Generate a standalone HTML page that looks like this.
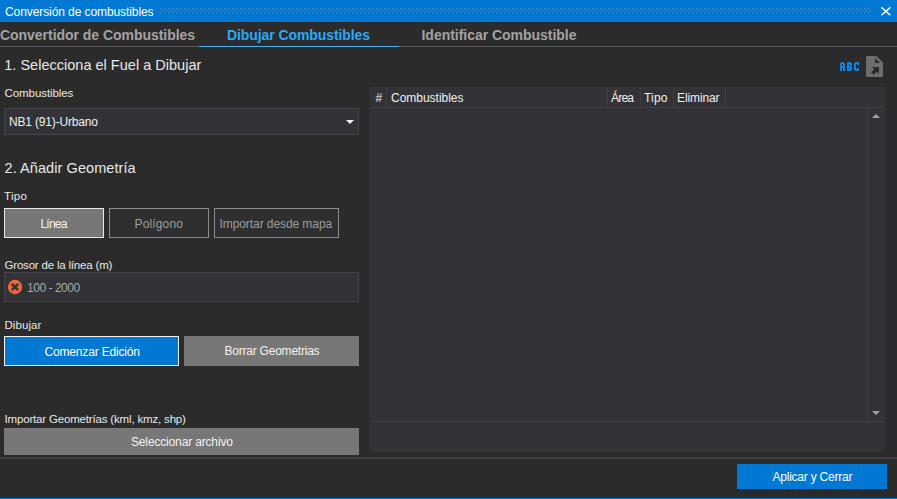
<!DOCTYPE html>
<html><head><meta charset="utf-8">
<style>
*{margin:0;padding:0;box-sizing:border-box}
html,body{width:897px;height:499px;overflow:hidden;background:#2b2b2b;font-family:"Liberation Sans",sans-serif}
.t{position:absolute;white-space:pre;line-height:1}
svg{position:absolute;display:block}
</style></head><body>
<div style="position:absolute;left:0px;top:0px;width:897px;height:22px;background:#0078d4;"></div>
<svg width="712" height="6" style="left:160px;top:8px"><defs><pattern id="p" width="4" height="4" patternUnits="userSpaceOnUse"><rect x="0" y="0" width="1" height="1" fill="#4e9cdc"/><rect x="2" y="2" width="1" height="1" fill="#4e9cdc"/></pattern></defs><rect x="0" y="0" width="711" height="5" fill="url(#p)"/></svg>
<div class="t" style="left:5.0px;top:6px;font-size:12px;color:#ffffff;letter-spacing:-0.088px">Conversión de combustibles</div>
<svg width="12" height="12" style="left:880px;top:5px"><path d="M1.4 2.4 L10.4 10.2 M10.4 2.4 L1.4 10.2" stroke="#fff" stroke-width="1.4"/></svg>
<div class="t" style="left:0.0px;top:28px;font-size:14px;font-weight:bold;color:#a3a3a3;letter-spacing:-0.038px">Convertidor de Combustibles</div>
<div class="t" style="left:227.0px;top:28px;font-size:14px;font-weight:bold;color:#27a9f8;letter-spacing:-0.084px">Dibujar Combustibles</div>
<div class="t" style="left:421.5px;top:28px;font-size:14px;font-weight:bold;color:#a3a3a3;letter-spacing:-0.027px">Identificar Combustible</div>
<div style="position:absolute;left:0px;top:46px;width:897px;height:1px;background:#555555;"></div>
<div style="position:absolute;left:199px;top:46px;width:200px;height:1px;background:#4cb3f5;"></div>
<div class="t" style="left:4.25px;top:58px;font-size:14.5px;color:#e8e8e8;letter-spacing:0.013px">1. Selecciona el Fuel a Dibujar</div>
<svg width="19" height="9" style="left:840px;top:62px" shape-rendering="crispEdges" fill="#0a84e6"><rect x="1" y="0" width="1" height="1"/><rect x="2" y="0" width="1" height="1"/><rect x="3" y="0" width="1" height="1"/><rect x="0" y="1" width="1" height="1"/><rect x="1" y="1" width="1" height="1"/><rect x="2" y="1" width="1" height="1"/><rect x="3" y="1" width="1" height="1"/><rect x="4" y="1" width="1" height="1"/><rect x="0" y="2" width="1" height="1"/><rect x="1" y="2" width="1" height="1"/><rect x="3" y="2" width="1" height="1"/><rect x="4" y="2" width="1" height="1"/><rect x="0" y="3" width="1" height="1"/><rect x="1" y="3" width="1" height="1"/><rect x="3" y="3" width="1" height="1"/><rect x="4" y="3" width="1" height="1"/><rect x="0" y="4" width="1" height="1"/><rect x="1" y="4" width="1" height="1"/><rect x="2" y="4" width="1" height="1"/><rect x="3" y="4" width="1" height="1"/><rect x="4" y="4" width="1" height="1"/><rect x="0" y="5" width="1" height="1"/><rect x="1" y="5" width="1" height="1"/><rect x="2" y="5" width="1" height="1"/><rect x="3" y="5" width="1" height="1"/><rect x="4" y="5" width="1" height="1"/><rect x="0" y="6" width="1" height="1"/><rect x="1" y="6" width="1" height="1"/><rect x="3" y="6" width="1" height="1"/><rect x="4" y="6" width="1" height="1"/><rect x="0" y="7" width="1" height="1"/><rect x="1" y="7" width="1" height="1"/><rect x="3" y="7" width="1" height="1"/><rect x="4" y="7" width="1" height="1"/><rect x="0" y="8" width="1" height="1"/><rect x="1" y="8" width="1" height="1"/><rect x="3" y="8" width="1" height="1"/><rect x="4" y="8" width="1" height="1"/><rect x="7" y="0" width="1" height="1"/><rect x="8" y="0" width="1" height="1"/><rect x="9" y="0" width="1" height="1"/><rect x="10" y="0" width="1" height="1"/><rect x="7" y="1" width="1" height="1"/><rect x="8" y="1" width="1" height="1"/><rect x="9" y="1" width="1" height="1"/><rect x="10" y="1" width="1" height="1"/><rect x="11" y="1" width="1" height="1"/><rect x="7" y="2" width="1" height="1"/><rect x="8" y="2" width="1" height="1"/><rect x="10" y="2" width="1" height="1"/><rect x="11" y="2" width="1" height="1"/><rect x="7" y="3" width="1" height="1"/><rect x="8" y="3" width="1" height="1"/><rect x="10" y="3" width="1" height="1"/><rect x="11" y="3" width="1" height="1"/><rect x="7" y="4" width="1" height="1"/><rect x="8" y="4" width="1" height="1"/><rect x="9" y="4" width="1" height="1"/><rect x="10" y="4" width="1" height="1"/><rect x="7" y="5" width="1" height="1"/><rect x="8" y="5" width="1" height="1"/><rect x="9" y="5" width="1" height="1"/><rect x="10" y="5" width="1" height="1"/><rect x="11" y="5" width="1" height="1"/><rect x="7" y="6" width="1" height="1"/><rect x="8" y="6" width="1" height="1"/><rect x="10" y="6" width="1" height="1"/><rect x="11" y="6" width="1" height="1"/><rect x="7" y="7" width="1" height="1"/><rect x="8" y="7" width="1" height="1"/><rect x="9" y="7" width="1" height="1"/><rect x="10" y="7" width="1" height="1"/><rect x="11" y="7" width="1" height="1"/><rect x="7" y="8" width="1" height="1"/><rect x="8" y="8" width="1" height="1"/><rect x="9" y="8" width="1" height="1"/><rect x="10" y="8" width="1" height="1"/><rect x="15" y="0" width="1" height="1"/><rect x="16" y="0" width="1" height="1"/><rect x="17" y="0" width="1" height="1"/><rect x="18" y="0" width="1" height="1"/><rect x="14" y="1" width="1" height="1"/><rect x="15" y="1" width="1" height="1"/><rect x="16" y="1" width="1" height="1"/><rect x="17" y="1" width="1" height="1"/><rect x="18" y="1" width="1" height="1"/><rect x="14" y="2" width="1" height="1"/><rect x="15" y="2" width="1" height="1"/><rect x="17" y="2" width="1" height="1"/><rect x="18" y="2" width="1" height="1"/><rect x="14" y="3" width="1" height="1"/><rect x="15" y="3" width="1" height="1"/><rect x="14" y="4" width="1" height="1"/><rect x="15" y="4" width="1" height="1"/><rect x="14" y="5" width="1" height="1"/><rect x="15" y="5" width="1" height="1"/><rect x="14" y="6" width="1" height="1"/><rect x="15" y="6" width="1" height="1"/><rect x="17" y="6" width="1" height="1"/><rect x="18" y="6" width="1" height="1"/><rect x="14" y="7" width="1" height="1"/><rect x="15" y="7" width="1" height="1"/><rect x="16" y="7" width="1" height="1"/><rect x="17" y="7" width="1" height="1"/><rect x="18" y="7" width="1" height="1"/><rect x="15" y="8" width="1" height="1"/><rect x="16" y="8" width="1" height="1"/><rect x="17" y="8" width="1" height="1"/><rect x="18" y="8" width="1" height="1"/></svg>
<svg width="20" height="24" style="left:865px;top:55px">
<path d="M2.5 1 H11.5 L18 7.5 V20.5 Q18 22 16.5 22 H2.5 Q1 22 1 20.5 V2.5 Q1 1 2.5 1 Z" fill="#6e6e6e"/>
<path d="M10 3 V8 H15 Z" fill="#2b2b2b"/>
<path d="M7 12 H14 V19 Z" fill="#2b2b2b"/>
<path d="M7.4 18.6 L12 14" stroke="#2b2b2b" stroke-width="3.6"/>
</svg>
<div class="t" style="left:4.5px;top:88px;font-size:11.5px;color:#e8e8e8;letter-spacing:-0.073px">Combustibles</div>
<div style="position:absolute;left:4px;top:108px;width:355px;height:27px;background:#333337;border:1px solid #434349"></div>
<div class="t" style="left:9.0px;top:116px;font-size:12px;color:#f0f0f0;letter-spacing:-0.171px">NB1 (91)-Urbano</div>
<svg width="10" height="6" style="left:345px;top:119px"><path d="M1 1 L9 1 L5 5 Z" fill="#f0f0f0"/></svg>
<div class="t" style="left:4.5px;top:161px;font-size:14.5px;color:#e8e8e8;letter-spacing:0.078px">2. Añadir Geometría</div>
<div class="t" style="left:4.0px;top:191px;font-size:11.5px;color:#e8e8e8;letter-spacing:0.333px">Tipo</div>
<div style="position:absolute;left:4px;top:208px;width:100px;height:30px;background:#777777;border:1px solid #e8e8e8"></div>
<div style="position:absolute;left:109px;top:208px;width:100px;height:30px;background:#2f2f2f;border:1px solid #8a8a8a"></div>
<div style="position:absolute;left:214px;top:208px;width:125px;height:30px;background:#2f2f2f;border:1px solid #8a8a8a"></div>
<div class="t" style="left:40.5px;top:218px;font-size:12px;color:#f2f2f2;letter-spacing:-0.8px">Línea</div>
<div class="t" style="left:134.5px;top:218px;font-size:12px;color:#9c9c9c;letter-spacing:0.143px">Polígono</div>
<div class="t" style="left:219.5px;top:218px;font-size:12px;color:#9c9c9c;letter-spacing:-0.078px">Importar desde mapa</div>
<div class="t" style="left:4.5px;top:260px;font-size:11.5px;color:#e8e8e8;letter-spacing:-0.19px">Grosor de la línea (m)</div>
<div style="position:absolute;left:4px;top:272px;width:355px;height:30px;background:#333337;border:1px solid #434349"></div>
<svg width="16" height="16" style="left:7px;top:279px"><circle cx="8" cy="8" r="7.2" fill="#f0683a"/><path d="M4.8 4.8 L11.2 11.2 M11.2 4.8 L4.8 11.2" stroke="#333337" stroke-width="2.6"/></svg>
<div class="t" style="left:27.0px;top:282px;font-size:12px;color:#a8a8a8;letter-spacing:-0.467px">100 - 2000</div>
<div class="t" style="left:4.5px;top:320px;font-size:11.5px;color:#e8e8e8;letter-spacing:0.067px">Dibujar</div>
<div style="position:absolute;left:4px;top:336px;width:175px;height:30px;background:#0078d4;border:1px solid #f2f2f2"></div>
<div style="position:absolute;left:184px;top:336px;width:175px;height:30px;background:#777777;"></div>
<div class="t" style="left:44.5px;top:346px;font-size:12px;color:#ffffff;letter-spacing:-0.173px">Comenzar Edición</div>
<div class="t" style="left:224.5px;top:345px;font-size:12px;color:#f2f2f2;letter-spacing:-0.225px">Borrar Geometrias</div>
<div class="t" style="left:4.5px;top:414px;font-size:11.5px;color:#e8e8e8;letter-spacing:-0.171px">Importar Geometrías (kml, kmz, shp)</div>
<div style="position:absolute;left:4px;top:428px;width:355px;height:27px;background:#777777;"></div>
<div class="t" style="left:131.0px;top:436px;font-size:12px;color:#f2f2f2;letter-spacing:-0.156px">Seleccionar archivo</div>
<div style="position:absolute;left:370px;top:87px;width:515px;height:365px;background:#333337;"></div>
<div style="position:absolute;left:371px;top:107px;width:513px;height:1px;background:#404046;"></div>
<div style="position:absolute;left:386px;top:88px;width:1px;height:19px;background:#404046;"></div>
<div style="position:absolute;left:607px;top:88px;width:1px;height:19px;background:#404046;"></div>
<div style="position:absolute;left:640px;top:88px;width:1px;height:19px;background:#404046;"></div>
<div style="position:absolute;left:673px;top:88px;width:1px;height:19px;background:#404046;"></div>
<div style="position:absolute;left:725px;top:88px;width:1px;height:19px;background:#404046;"></div>
<div style="position:absolute;left:867px;top:108px;width:1px;height:313px;background:#404046;"></div>
<div style="position:absolute;left:371px;top:421px;width:513px;height:1px;background:#404046;"></div>
<div class="t" style="left:375.5px;top:92px;font-size:12px;color:#f0f0f0;letter-spacing:0.0px">#</div>
<div class="t" style="left:391.0px;top:92px;font-size:12px;color:#f0f0f0;letter-spacing:-0.018px">Combustibles</div>
<div class="t" style="left:611.0px;top:92px;font-size:12px;color:#f0f0f0;letter-spacing:-0.8px">Área</div>
<div class="t" style="left:644.0px;top:92px;font-size:12px;color:#f0f0f0;letter-spacing:0.2px">Tipo</div>
<div class="t" style="left:677.0px;top:92px;font-size:12px;color:#f0f0f0;letter-spacing:-0.114px">Eliminar</div>
<svg width="10" height="6" style="left:871px;top:113px"><path d="M1 5 L9 5 L5 1 Z" fill="#a0a0a0"/></svg>
<svg width="10" height="6" style="left:871px;top:410px"><path d="M1 1 L9 1 L5 5 Z" fill="#a0a0a0"/></svg>
<div style="position:absolute;left:0px;top:457px;width:897px;height:2px;background:#3d3d43;"></div>
<div style="position:absolute;left:737px;top:464px;width:150px;height:25px;background:#0078d4;"></div>
<div class="t" style="left:772.5px;top:471px;font-size:12px;color:#ffffff;letter-spacing:-0.227px">Aplicar y Cerrar</div>
<div style="position:absolute;left:0px;top:498px;width:897px;height:1px;background:#0078d4;"></div>
</body></html>
